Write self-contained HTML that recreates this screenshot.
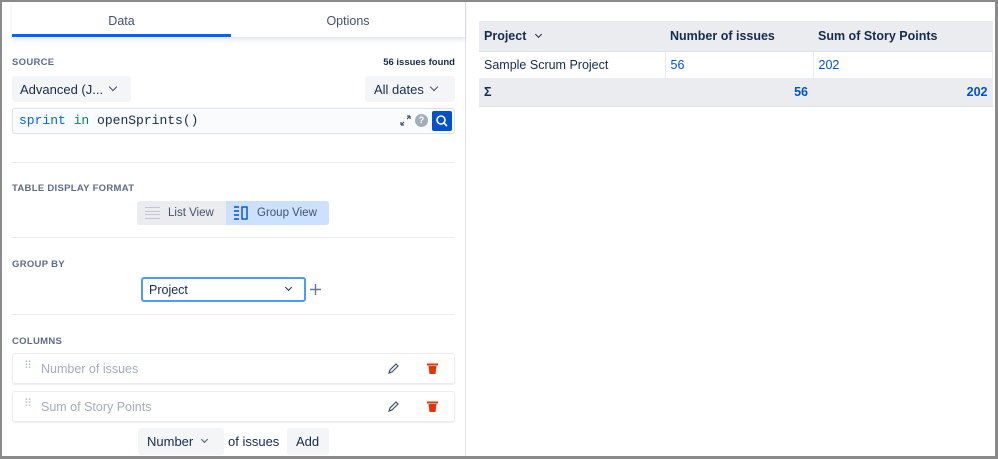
<!DOCTYPE html><html><head><style>
*{box-sizing:border-box;margin:0;padding:0}
body{width:998px;height:459px;overflow:hidden;background:#fff;font-family:"Liberation Sans",sans-serif;color:#172b4d;position:relative}
.frame{position:absolute;left:0;top:0;width:998px;height:459px;border:2px solid #8a8a8a;border-right-width:3px;border-bottom-width:3px;z-index:10;pointer-events:none}
.a{position:absolute;white-space:nowrap}
.lbl{font-size:9.5px;font-weight:bold;color:#5e6c84;letter-spacing:.3px}
.btn{background:#f4f5f7;border-radius:3px;font-size:13px;color:#172b4d}
.hr{position:absolute;left:12px;width:443px;height:1px;background:#ebecf0}
.chev{display:inline-block;width:6px;height:6px;border-right:1.8px solid #42526e;border-bottom:1.8px solid #42526e;transform:rotate(45deg)}
.row{position:absolute;left:12px;width:443px;height:31px;border:1px solid #ebecf0;border-radius:3px;box-shadow:0 1px 1px rgba(9,30,66,.08);font-size:12.5px;color:#a5adba}
td,th{font-size:12.5px;padding:0 5px;text-align:left}
</style></head><body>
<div class="frame"></div>
<div class="a" style="left:465px;top:0;width:1px;height:459px;background:#dfe1e6"></div>
<div class="a" style="left:12px;top:0;width:453px;height:37px;box-shadow:0 3px 4px rgba(9,30,66,.1)"></div>
<div class="a" style="left:12px;top:14px;width:219px;text-align:center;font-size:12.5px;color:#42526e">Data</div>
<div class="a" style="left:231px;top:14px;width:234px;text-align:center;font-size:12.5px;color:#42526e">Options</div>
<div class="a" style="left:12px;top:34px;width:219px;height:3px;background:#0065ff"></div>
<div class="a lbl" style="left:12px;top:57px">SOURCE</div>
<div class="a" style="left:320px;top:57px;width:135px;text-align:right;font-size:9.5px;font-weight:bold;color:#172b4d">56 issues found</div>
<div class="a btn" style="left:12px;top:76px;width:119px;height:26px;padding:6px 8px">Advanced (J...</div>
<span class="a chev" style="left:110px;top:84px"></span>
<div class="a btn" style="left:365px;top:76px;width:90px;height:26px;padding:6px 9px">All dates</div>
<span class="a chev" style="left:431px;top:84px"></span>
<div class="a" style="left:12px;top:108px;width:443px;height:26px;border:1.5px solid #dfe1e6;border-radius:3px;background:#fafbfc;font-family:'Liberation Mono',monospace;font-size:13px;padding:4px 6px"><span style="color:#0065ff">sprint</span> <span style="color:#00875a">in</span> openSprints()</div>
<svg class="a" style="left:400px;top:115px" width="11" height="11"><path d="M1 10L4 7M1 10V7M1 10H4M10 1L7 4M10 1V4M10 1H7" stroke="#42526e" stroke-width="1.2" fill="none"/></svg>
<div class="a" style="left:415px;top:114px;width:13px;height:13px;border-radius:50%;background:#a5adba;color:#fff;font-size:9px;font-weight:bold;text-align:center;line-height:13px">?</div>
<div class="a" style="left:432px;top:111px;width:20px;height:20px;background:#0052cc;border-radius:2px"><svg width="20" height="20"><circle cx="9" cy="9" r="4" stroke="#fff" stroke-width="1.6" fill="none"/><path d="M12 12l3 3" stroke="#fff" stroke-width="1.6"/></svg></div>
<div class="hr" style="top:162px"></div>
<div class="a lbl" style="left:12px;top:183px">TABLE DISPLAY FORMAT</div>
<div class="a" style="left:137px;top:201px;width:192px;height:24px;border-radius:3px;background:#ebecf0"></div>
<div class="a" style="left:226px;top:201px;width:103px;height:24px;border-radius:0 3px 3px 0;background:#cce0ff"></div>
<div class="a" style="left:145px;top:207px;width:15px;height:12px;border-top:1px solid #c1c7d0;border-bottom:1px solid #c1c7d0"><div style="margin-top:3px;height:4px;border-top:1px solid #c1c7d0;border-bottom:1px solid #c1c7d0"></div></div>
<div class="a" style="left:168px;top:207px;font-size:11.5px;color:#42526e">List View</div>
<svg class="a" style="left:234px;top:206px" width="15" height="14"><path d="M0 1h5M0 5h5M0 9h5M0 13h5" stroke="#0052cc" stroke-width="1.4"/><rect x="8" y="1" width="5" height="12" stroke="#0052cc" stroke-width="1.4" fill="none"/></svg>
<div class="a" style="left:257px;top:207px;font-size:11.5px;color:#42526e">Group View</div>
<div class="hr" style="top:237px"></div>
<div class="a lbl" style="left:12px;top:259px">GROUP BY</div>
<div class="a" style="left:141px;top:277px;width:165px;height:25px;border:2px solid #4c9aff;border-radius:3px;font-size:12.5px;padding:4px 6px;background:#fff">Project</div>
<span class="a chev" style="left:286px;top:285px;width:5px;height:5px;border-color:#172b4d"></span>
<svg class="a" style="left:309px;top:283px" width="13" height="13"><path d="M6.5 1v11M1 6.5h11" stroke="#6b778c" stroke-width="1.4"/></svg>
<div class="hr" style="top:314px"></div>
<div class="a lbl" style="left:12px;top:336px">COLUMNS</div>
<div class="row" style="top:353px"><span class="a" style="left:11px;top:5px;font-size:11px;color:#c1c7d0">⠿</span><span class="a" style="left:28px;top:8px">Number of issues</span>
<svg class="a" style="left:375px;top:9px" width="11" height="11"><path d="M1 10l1-3 6-6 2 2-6 6z" stroke="#42526e" stroke-width="1.2" fill="none"/></svg>
<svg class="a" style="left:414px;top:9px" width="11" height="11"><path d="M0 1.5h11" stroke="#de350b" stroke-width="2"/><path d="M1.5 3h8l-1 8h-6z" fill="#de350b"/></svg></div>
<div class="row" style="top:391px"><span class="a" style="left:11px;top:5px;font-size:11px;color:#c1c7d0">⠿</span><span class="a" style="left:28px;top:8px">Sum of Story Points</span>
<svg class="a" style="left:375px;top:9px" width="11" height="11"><path d="M1 10l1-3 6-6 2 2-6 6z" stroke="#42526e" stroke-width="1.2" fill="none"/></svg>
<svg class="a" style="left:414px;top:9px" width="11" height="11"><path d="M0 1.5h11" stroke="#de350b" stroke-width="2"/><path d="M1.5 3h8l-1 8h-6z" fill="#de350b"/></svg></div>
<div class="a btn" style="left:138px;top:428px;width:86px;height:27px;padding:6px 9px">Number</div>
<span class="a chev" style="left:202px;top:437px;width:5px;height:5px"></span>
<div class="a" style="left:228px;top:434px;font-size:13px">of issues</div>
<div class="a btn" style="left:287px;top:428px;width:42px;height:27px;padding:6px 9px">Add</div>
<table class="a" style="left:479px;top:21px;width:514px;border-collapse:collapse;white-space:nowrap">
<tr style="height:30px;background:#ebecf0"><th style="width:186px;border-bottom:1px solid #dfe1e6">Project <span class="chev" style="margin-left:6px;position:relative;top:-3px;width:5px;height:5px;border-color:#172b4d"></span></th><th style="width:148px;border-bottom:1px solid #dfe1e6">Number of issues</th><th style="border-bottom:1px solid #dfe1e6">Sum of Story Points</th></tr>
<tr style="height:27px"><td style="border-right:1px solid #ebecf0">Sample Scrum Project</td><td style="color:#0052cc;border-right:1px solid #ebecf0">56</td><td style="color:#0052cc;border-right:1px solid #ebecf0">202</td></tr>
<tr style="height:28px;background:#ebecf0"><td style="font-weight:bold;border-bottom:1px solid #dfe1e6">Σ</td><td style="text-align:right;color:#0052cc;font-weight:bold;border-bottom:1px solid #dfe1e6">56</td><td style="text-align:right;color:#0052cc;font-weight:bold;border-bottom:1px solid #dfe1e6">202</td></tr>
</table>
</body></html>
